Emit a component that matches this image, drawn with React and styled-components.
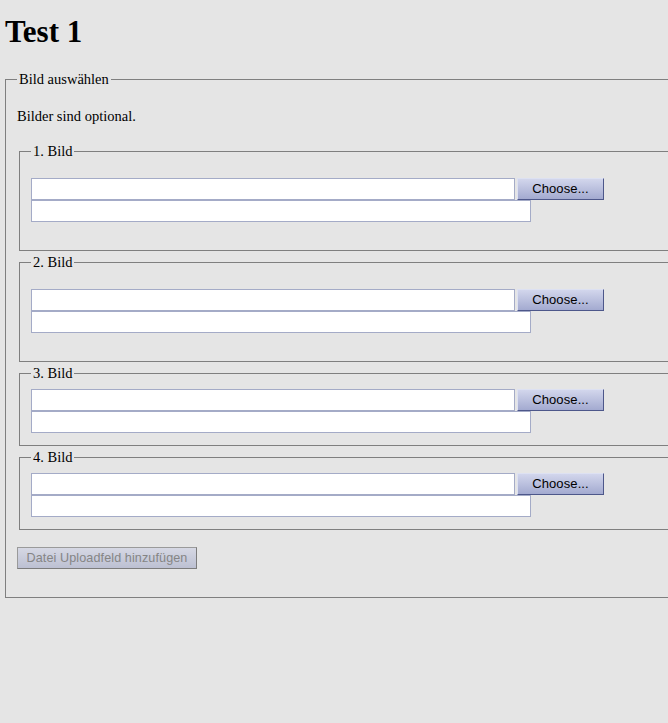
import React from "react";
import styled, { createGlobalStyle } from "styled-components";

const GlobalStyle = createGlobalStyle`
  html, body {
    margin: 0;
    padding: 0;
    overflow: hidden;
    background-color: #e5e5e5;
  }

  body {
    font-family: "Liberation Serif", "Times New Roman", serif;
    font-size: 14.5px;
    color: #000000;
  }
`;

const Page = styled.div`
  padding: 0 5px;
  width: 720px;
`;

const Title = styled.h1`
  font-size: 31px;
  font-weight: bold;
  margin: 14px 0 0;
  line-height: 36px;
`;

const Fieldset = styled.fieldset`
  margin: ${(props) => (props.outer ? "21px 0 0" : "0 0 3px 2px")};
  border: 1px solid #7f7f7f;
  padding: ${(props) =>
    props.outer
      ? "4px 11px 28px"
      : props.spacious
      ? "18px 11px 28px"
      : "7px 11px 12px"};
  min-width: 0;
`;

const Legend = styled.legend`
  padding: 0 2px;
  font-size: 14.5px;
  line-height: 17px;
`;

const Note = styled.p`
  margin: 16px 0 18px;
  line-height: 17px;
`;

const FileRow = styled.div`
  display: flex;
  gap: 2px;
  align-items: center;
`;

const Field = styled.input`
  box-sizing: border-box;
  width: ${(props) => props.width}px;
  height: 22px;
  margin: 0;
  border: 1px solid #a4abc7;
  background-color: #ffffff;
  padding: 0 3px;
  font-family: "Liberation Sans", Arial, sans-serif;
  font-size: 13px;
  display: block;
`;

const Button = styled.button`
  box-sizing: border-box;
  height: 22px;
  margin: 0;
  padding: 0;
  white-space: nowrap;
  font-family: "Liberation Sans", Arial, sans-serif;
  font-size: ${(props) => props.size || 13}px;
  line-height: 18px;
  letter-spacing: 0.1px;
  color: ${(props) => (props.disabled ? "#858585" : "#000000")};
  background: ${(props) =>
    props.disabled
      ? "linear-gradient(#d6d8e4, #bcc0d2)"
      : "linear-gradient(#d2d6ec, #a3aad0)"};
  border: 1px solid;
  border-color: ${(props) =>
    props.disabled
      ? "#9a9a9a #7c7c7c #7c7c7c #9a9a9a"
      : "#dde1f2 #4d578a #4d578a #dde1f2"};
  border-radius: 0;
  cursor: default;
`;

const ChooseButton = styled(Button)`
  width: 87px;
`;

const AddButton = styled(Button)`
  width: 180px;
  margin-top: 17px;
  display: block;
`;

function UploadField({ number, spacious }) {
  return (
    <Fieldset spacious={spacious}>
      <Legend>{number}. Bild</Legend>
      <FileRow>
        <Field type="text" width={484} />
        <ChooseButton type="button">Choose...</ChooseButton>
      </FileRow>
      <Field type="text" width={500} />
    </Fieldset>
  );
}

export default function App() {
  return (
    <Page>
      <GlobalStyle />
      <Title>Test 1</Title>
      <Fieldset outer>
        <Legend>Bild auswählen</Legend>
        <Note>Bilder sind optional.</Note>
        <UploadField number={1} spacious />
        <UploadField number={2} spacious />
        <UploadField number={3} />
        <UploadField number={4} />
        <AddButton type="button" size={12.6} disabled>
          Datei Uploadfeld hinzufügen
        </AddButton>
      </Fieldset>
    </Page>
  );
}
